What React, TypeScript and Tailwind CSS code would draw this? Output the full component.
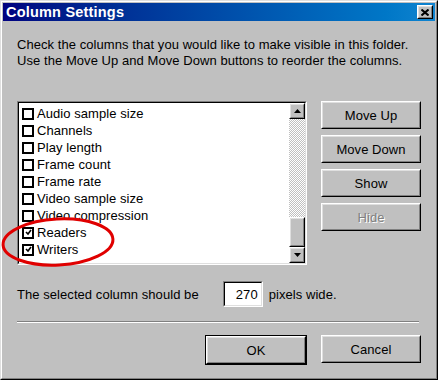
import React from "react";

const items = [
  { label: "Audio sample size", checked: false },
  { label: "Channels", checked: false },
  { label: "Play length", checked: false },
  { label: "Frame count", checked: false },
  { label: "Frame rate", checked: false },
  { label: "Video sample size", checked: false },
  { label: "Video compression", checked: false },
  { label: "Readers", checked: true },
  { label: "Writers", checked: true },
];

const Raised = ({ children, className = "" }: { children?: React.ReactNode; className?: string }) => (
  <div className={`border border-t-white border-l-white border-r-black border-b-black ${className}`}>
    <div className="w-full h-full border border-t-[#dfdfdf] border-l-[#dfdfdf] border-r-[#808080] border-b-[#808080] bg-[#c0c0c0] flex items-center justify-center">
      {children}
    </div>
  </div>
);

const Button = ({ label, disabled = false }: { label: string; disabled?: boolean }) => (
  <Raised className="w-[100px] h-[28px]">
    <span className={disabled ? "text-[#808080] [text-shadow:1px_1px_0_#ffffff]" : ""}>{label}</span>
  </Raised>
);

const Arrow = ({ down = false }: { down?: boolean }) => (
  <svg width="7" height="4" viewBox="0 0 7 4">
    {down ? <path d="M0 0 H7 L3.5 4 Z" fill="black" /> : <path d="M0 4 H7 L3.5 0 Z" fill="black" />}
  </svg>
);

const CheckBox = ({ checked }: { checked: boolean }) => (
  <div className="w-[12px] h-[12px] border-2 border-black bg-white flex items-center justify-center">
    {checked && (
      <svg width="7" height="7" viewBox="0 0 7 7">
        <path d="M1 3 L3 5 L6 1" fill="none" stroke="black" strokeWidth="1.6" />
      </svg>
    )}
  </div>
);

export default function App() {
  return (
    <div className="relative w-[438px] h-[380px] bg-[#c0c0c0] border border-t-[#dfdfdf] border-l-[#dfdfdf] border-r-black border-b-black font-['Liberation_Sans',Arial,sans-serif] text-[13px] tracking-[0.06px] text-black leading-none">
      <div className="h-full border border-t-white border-l-white border-r-[#808080] border-b-[#808080] p-px flex flex-col">
        {/* title bar */}
        <div className="h-[18px] flex items-center justify-between bg-gradient-to-r from-[#000080] to-[#1084d0] pl-[3px] pr-[2px]">
          <span className="text-white font-bold text-[14.5px] tracking-[0.2px]">Column Settings</span>
          <Raised className="w-[16px] h-[14px]">
            <svg width="8" height="7" viewBox="0 0 8 7">
              <path d="M0.5 0.5 L7.5 6.5 M7.5 0.5 L0.5 6.5" stroke="black" strokeWidth="2" />
            </svg>
          </Raised>
        </div>

        <div className="flex-1 flex flex-col px-[14px]">
          <p className="mt-[16px] leading-[16px]">
            Check the columns that you would like to make visible in this folder.
            <br />
            Use the Move Up and Move Down buttons to reorder the columns.
          </p>

          <div className="flex mt-[32px]">
            <div className="w-[290px] h-[164px] border border-t-[#808080] border-l-[#808080] border-r-white border-b-white">
              <div className="w-full h-full border border-t-black border-l-black border-r-[#dfdfdf] border-b-[#dfdfdf] bg-white flex">
                <div className="flex-1 pt-[2px] pl-[3px]">
                  {items.map((it) => (
                    <div key={it.label} className="h-[17px] flex items-center">
                      <CheckBox checked={it.checked} />
                      <span className="ml-[3px]">{it.label}</span>
                    </div>
                  ))}
                </div>
                <div className="w-[16px] flex flex-col">
                  <Raised className="h-[16px]">
                    <Arrow />
                  </Raised>
                  <div className="flex-1 bg-[image:repeating-conic-gradient(#c0c0c0_0%_25%,#ffffff_0%_50%)] bg-[length:2px_2px]" />
                  <Raised className="h-[30px]" />
                  <Raised className="h-[16px]">
                    <Arrow down />
                  </Raised>
                </div>
              </div>
            </div>

            <div className="ml-[14px] flex flex-col gap-[6px]">
              <Button label="Move Up" />
              <Button label="Move Down" />
              <Button label="Show" />
              <Button label="Hide" disabled />
            </div>
          </div>

          <div className="mt-[16px] h-[26px] flex items-center">
            <span>The selected column should be</span>
            <div className="ml-[24px] w-[40px] h-[26px] border border-t-[#808080] border-l-[#808080] border-r-white border-b-white">
              <div className="w-full h-full border border-t-black border-l-black border-r-[#dfdfdf] border-b-[#dfdfdf] bg-white flex items-center justify-end pr-[3px]">
                270
              </div>
            </div>
            <span className="ml-[6px]">pixels wide.</span>
          </div>

          <div className="mt-[14px] w-[402px] border-t border-t-[#808080] border-b border-b-white" />

          <div className="mt-[12px] flex justify-end gap-[14px]">
            <div className="border border-black">
              <Button label="OK" />
            </div>
            <Button label="Cancel" />
          </div>
        </div>
      </div>

      {/* red hand-drawn highlight */}
      <svg className="absolute left-0 top-0 pointer-events-none" width="438" height="380">
        <ellipse cx="57" cy="241" rx="55" ry="23" fill="none" stroke="#e00000" strokeWidth="3" transform="rotate(-3 57 241)" />
      </svg>
    </div>
  );
}
